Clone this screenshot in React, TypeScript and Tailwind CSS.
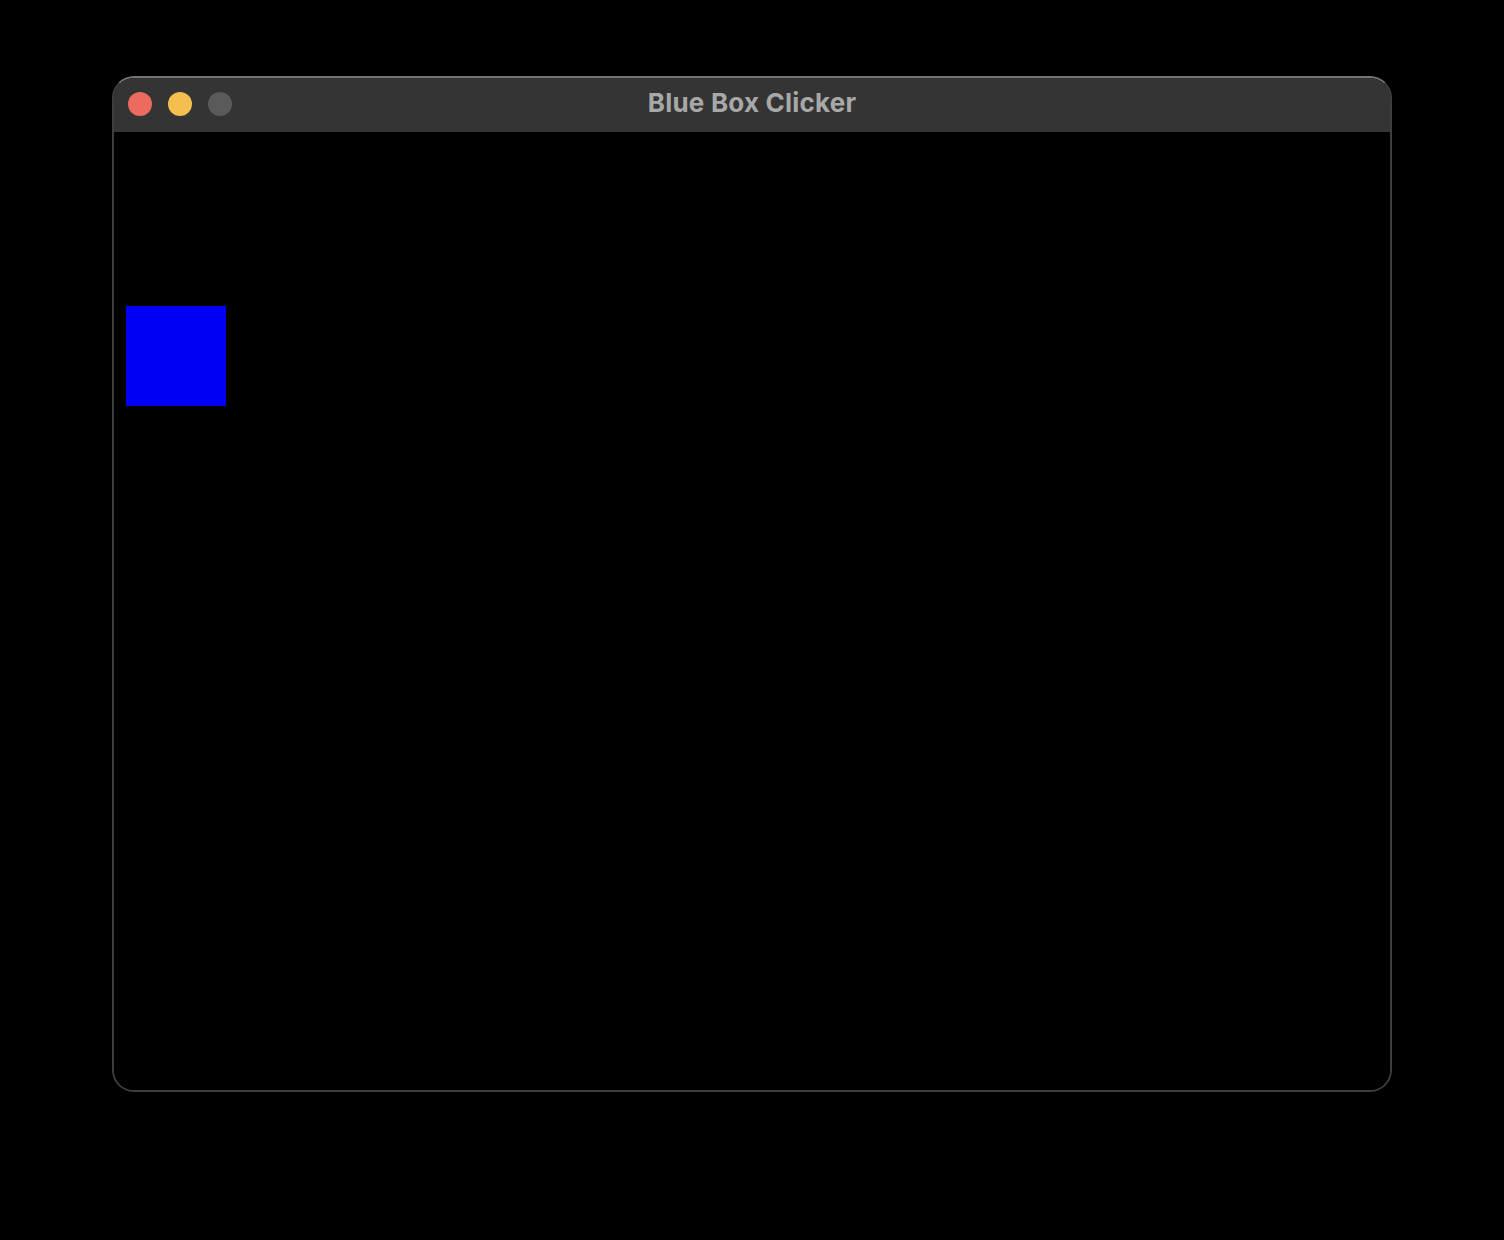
export default function App() {
    return (
        <div className="min-h-[1240px] bg-black pt-[76px] pl-[112px] font-['Inter',sans-serif]">
            <div className="w-[1280px] h-[1016px] flex flex-col rounded-[22px] overflow-hidden border-2 border-[#3e3e3e] border-t-[#757575] bg-black">
                {/* Title bar */}
                <div className="relative h-[54px] shrink-0 flex items-center bg-[#343434] pl-[14px] pb-[2px] gap-4">
                    <span className="w-6 h-6 rounded-full bg-[#ec6a5e]"></span>
                    <span className="w-6 h-6 rounded-full bg-[#f4bf4f]"></span>
                    <span className="w-6 h-6 rounded-full bg-[#5a5a5a]"></span>
                    <h1 className="absolute inset-x-0 top-0 pt-[9px] text-center text-[26px] leading-[32px] font-bold tracking-[0.2px] text-[#a8a8a8]">
                        Blue Box Clicker
                    </h1>
                </div>
                {/* Canvas */}
                <div className="flex-1 bg-black pt-[174px] pl-3">
                    <button className="block w-[100px] h-[100px] bg-[#0000f5]"></button>
                </div>
            </div>
        </div>
    );
}
